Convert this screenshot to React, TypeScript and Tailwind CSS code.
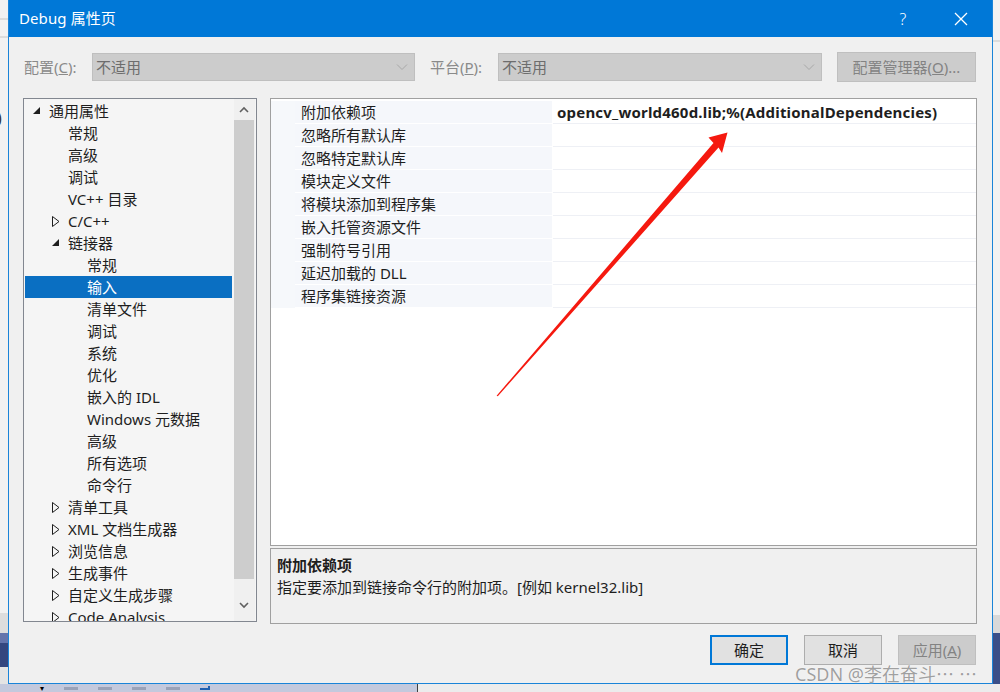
import React from "react";

const FONT = "font-['Noto_Sans','Noto_Sans_CJK_SC',sans-serif]";

type TreeNode = {
  label: string;
  level: number;
  expander?: "open" | "closed";
  selected?: boolean;
};

const tree: TreeNode[] = [
  { label: "通用属性", level: 0, expander: "open" },
  { label: "常规", level: 1 },
  { label: "高级", level: 1 },
  { label: "调试", level: 1 },
  { label: "VC++ 目录", level: 1 },
  { label: "C/C++", level: 1, expander: "closed" },
  { label: "链接器", level: 1, expander: "open" },
  { label: "常规", level: 2 },
  { label: "输入", level: 2, selected: true },
  { label: "清单文件", level: 2 },
  { label: "调试", level: 2 },
  { label: "系统", level: 2 },
  { label: "优化", level: 2 },
  { label: "嵌入的 IDL", level: 2 },
  { label: "Windows 元数据", level: 2 },
  { label: "高级", level: 2 },
  { label: "所有选项", level: 2 },
  { label: "命令行", level: 2 },
  { label: "清单工具", level: 1, expander: "closed" },
  { label: "XML 文档生成器", level: 1, expander: "closed" },
  { label: "浏览信息", level: 1, expander: "closed" },
  { label: "生成事件", level: 1, expander: "closed" },
  { label: "自定义生成步骤", level: 1, expander: "closed" },
  { label: "Code Analysis", level: 1, expander: "closed" },
];

const props = [
  { name: "附加依赖项", value: "opencv_world460d.lib;%(AdditionalDependencies)" },
  { name: "忽略所有默认库", value: "" },
  { name: "忽略特定默认库", value: "" },
  { name: "模块定义文件", value: "" },
  { name: "将模块添加到程序集", value: "" },
  { name: "嵌入托管资源文件", value: "" },
  { name: "强制符号引用", value: "" },
  { name: "延迟加载的 DLL", value: "" },
  { name: "程序集链接资源", value: "" },
];

const padByLevel = ["pl-[9px]", "pl-[28px]", "pl-[47px]"];

const Expander = ({ kind, selected }: { kind?: "open" | "closed"; selected?: boolean }) => (
  <span className="w-[16px] h-[22px] flex items-center shrink-0">
    {kind === "open" && (
      <svg width="8" height="8" viewBox="0 0 8 8">
        <polygon points="7,0 7,7 0,7" fill={selected ? "#fff" : "#1e1e1e"} />
      </svg>
    )}
    {kind === "closed" && (
      <svg width="8" height="11" viewBox="0 0 8 11">
        <polygon points="0.5,0.5 7,5.5 0.5,10.5" fill="none" stroke="#1e1e1e" strokeWidth="1" />
      </svg>
    )}
  </span>
);

const Combo = ({ w }: { w: string }) => (
  <div className={`${w} h-[28px] bg-[#cccccc] border border-[#bfbfbf] flex items-center justify-between pl-[3px] pr-[6px] text-[15px] text-[#6d6d6d]`}>
    <span>不适用</span>
    <svg width="12" height="8" viewBox="0 0 12 8">
      <polyline points="1,1.5 6,6.5 11,1.5" fill="none" stroke="#a8a8a8" strokeWidth="1" />
    </svg>
  </div>
);

const Chevron = ({ up }: { up?: boolean }) => (
  <svg width="10" height="7" viewBox="0 0 10 7">
    <polyline
      points={up ? "1,6 5,2 9,6" : "1,1 5,5 9,1"}
      fill="none"
      stroke="#606060"
      strokeWidth="1.6"
    />
  </svg>
);

export default function App() {
  return (
    <div className={`w-[1000px] h-[692px] relative overflow-hidden bg-[#f2f2f2] ${FONT}`}>
      {/* desktop behind the dialog */}
      <div className="absolute left-0 top-[18px] w-[8px] h-[2px] bg-[#dcdcdc]" />
      <div className="absolute left-0 top-[36px] w-[8px] h-[2px] bg-[#dcdcdc]" />
      <div className="absolute left-[-3px] top-[106px] text-[16px] text-[#333]">)</div>
      <div className="absolute left-0 top-[613px] w-[8px] h-[20px] bg-[#dddddd]" />
      <div className="absolute left-0 top-[633px] w-[8px] h-[10px] bg-[#6474ac]" />
      <div className="absolute left-0 top-[643px] w-[8px] h-[24px] bg-[#34467f]" />
      <div className="absolute left-0 top-[667px] w-[8px] h-[25px] bg-[#e4e4e4]" />
      <div className="absolute right-0 top-[40px] w-[8px] h-[2px] bg-[#dcdcdc]" />
      <div className="absolute right-0 top-[615px] w-[8px] h-[18px] bg-[#d9d9d9]" />
      <div className="absolute right-0 top-[633px] w-[8px] h-[59px] bg-[#3a4f88]" />
      <div className="absolute left-0 top-[684px] w-[417px] h-[8px] bg-[#c3c9dd] flex items-center gap-[20px] pl-[40px]">
        <span className="text-[8px] leading-none">▾</span>
        <span className="w-[14px] h-[3px] bg-[#9aa2b8]" />
        <span className="w-[14px] h-[3px] bg-[#9aa2b8]" />
        <span className="w-[14px] h-[3px] bg-[#9aa2b8]" />
        <span className="w-[14px] h-[3px] bg-[#9aa2b8]" />
        <span className="w-[10px] h-[4px] border-b-2 border-r-2 border-[#2060b0]" />
      </div>
      <div className="absolute left-[417px] top-[684px] w-[1px] h-[8px] bg-[#404040]" />
      <div className="absolute left-[418px] top-[684px] w-[582px] h-[8px] bg-[#ececec]" />

      {/* dialog window */}
      <div className="absolute left-[8px] top-0 w-[985px] h-[684px] border border-t-0 border-[#1a84d8] bg-[#f0f0f0] flex flex-col">
        {/* title bar */}
        <div className="h-[37px] bg-[#0078d7] flex items-center justify-between pl-[10px] text-white shrink-0">
          <span className="text-[15px] tracking-[0.1px]">Debug 属性页</span>
          <div className="flex items-center h-full">
            <span className="w-[54px] text-center text-[16px] font-light">?</span>
            <span className="w-[62px] flex justify-center">
              <svg width="14" height="14" viewBox="0 0 14 14">
                <path d="M1 1 L13 13 M13 1 L1 13" stroke="#fff" strokeWidth="1.3" />
              </svg>
            </span>
          </div>
        </div>

        {/* configuration row */}
        <div className="mt-[15px] h-[30px] flex items-center pl-[15px] pr-[15px] text-[15px] shrink-0">
          <span className="w-[68px] text-[#8a8a8a]">
            配置(<u>C</u>):
          </span>
          <Combo w="w-[323px]" />
          <span className="w-[68px] ml-[15px] text-[#8a8a8a]">
            平台(<u>P</u>):
          </span>
          <Combo w="w-[324px]" />
          <div className="ml-[15px] w-[139px] h-[30px] bg-[#cccccc] border border-[#bfbfbf] flex items-center justify-center text-[#838383]">
            配置管理器(<u>O</u>)...
          </div>
        </div>

        {/* main area */}
        <div className="mt-[16px] flex pl-[14px] pr-[15px] h-[526px] shrink-0">
          {/* tree */}
          <div className="w-[234px] h-[524px] border border-[#828790] bg-[#f5f5f5] flex overflow-hidden">
            <div className="w-[210px] pt-[1px] text-[15px] text-[#1e1e1e]">
              {tree.map((n, i) => (
                <div
                  key={i}
                  className={`h-[22px] flex items-center whitespace-nowrap ${padByLevel[n.level]} ${
                    n.selected ? "bg-[#0a6fc2] text-white ml-[1px] mr-[2px]" : ""
                  }`}
                >
                  <Expander kind={n.expander} selected={n.selected} />
                  <span className={n.selected ? "-ml-[1px]" : ""}>{n.label}</span>
                </div>
              ))}
            </div>
            <div className="w-[21px] flex flex-col bg-[#f0f0f0] pr-[1px]">
              <div className="h-[21px] flex items-center justify-center">
                <Chevron up />
              </div>
              <div className="h-[459px] bg-[#cdcdcd]" />
              <div className="flex-1 flex items-center justify-center pt-[10px]">
                <Chevron />
              </div>
            </div>
          </div>

          {/* right column */}
          <div className="ml-[13px] flex-1 flex flex-col">
            <div className="h-[449px] border border-[#a0a0a0] bg-white pt-[2px]">
              {props.map((p, i) => (
                <div key={i} className="h-[23px] flex text-[15px] text-[#1e1e1e]">
                  <div className="w-[24px] bg-[#f6f8fb]" />
                  <div className="w-[258px] bg-[#f5f7fb] border-b border-r border-white flex items-center pl-[6px] whitespace-nowrap">
                    {p.name}
                  </div>
                  <div className="flex-1 border-b border-[#eef0f5] flex items-center pl-[4px] font-bold whitespace-nowrap tracking-[0.2px]">
                    {p.value}
                  </div>
                </div>
              ))}
            </div>
            <div className="mt-[2px] h-[76px] border border-[#a0a0a0] bg-[#f0f0f0] pl-[6px] pt-[5px] text-[15px] text-[#1e1e1e]">
              <div className="h-[22px] flex items-center font-bold">附加依赖项</div>
              <div className="h-[22px] flex items-center">指定要添加到链接命令行的附加项。[例如 kernel32.lib]</div>
            </div>
          </div>
        </div>

        {/* buttons */}
        <div className="mt-[11px] h-[30px] flex justify-end gap-[16px] pr-[16px] text-[15px] shrink-0">
          <div className="w-[78px] h-[30px] border-2 border-[#0078d7] bg-[#e1e1e1] flex items-center justify-center text-[#1e1e1e]">
            确定
          </div>
          <div className="w-[78px] h-[30px] border border-[#adadad] bg-[#e1e1e1] flex items-center justify-center text-[#1e1e1e]">
            取消
          </div>
          <div className="w-[78px] h-[30px] border border-[#bfbfbf] bg-[#cccccc] flex items-center justify-center text-[#838383]">
            应用(<u>A</u>)
          </div>
        </div>
      </div>

      {/* red annotation arrow */}
      <svg className="absolute left-0 top-0 pointer-events-none" width="1000" height="692">
        <polygon
          points="727.5,132.5 708.5,137.5 713.5,143 496.6,395.7 497.8,396.3 718.5,147.5 722,153"
          fill="#f5190f"
        />
      </svg>

      {/* watermark */}
      <div className="absolute left-[795px] top-[664px] text-[18px] leading-none text-[#a0a0a0] whitespace-nowrap [text-shadow:0_0_1px_#fff,0_0_1px_#fff]">
        CSDN @李在奋斗<span className="font-['Noto_Sans_CJK_SC',sans-serif] tracking-[5px]">……</span>
      </div>
    </div>
  );
}
